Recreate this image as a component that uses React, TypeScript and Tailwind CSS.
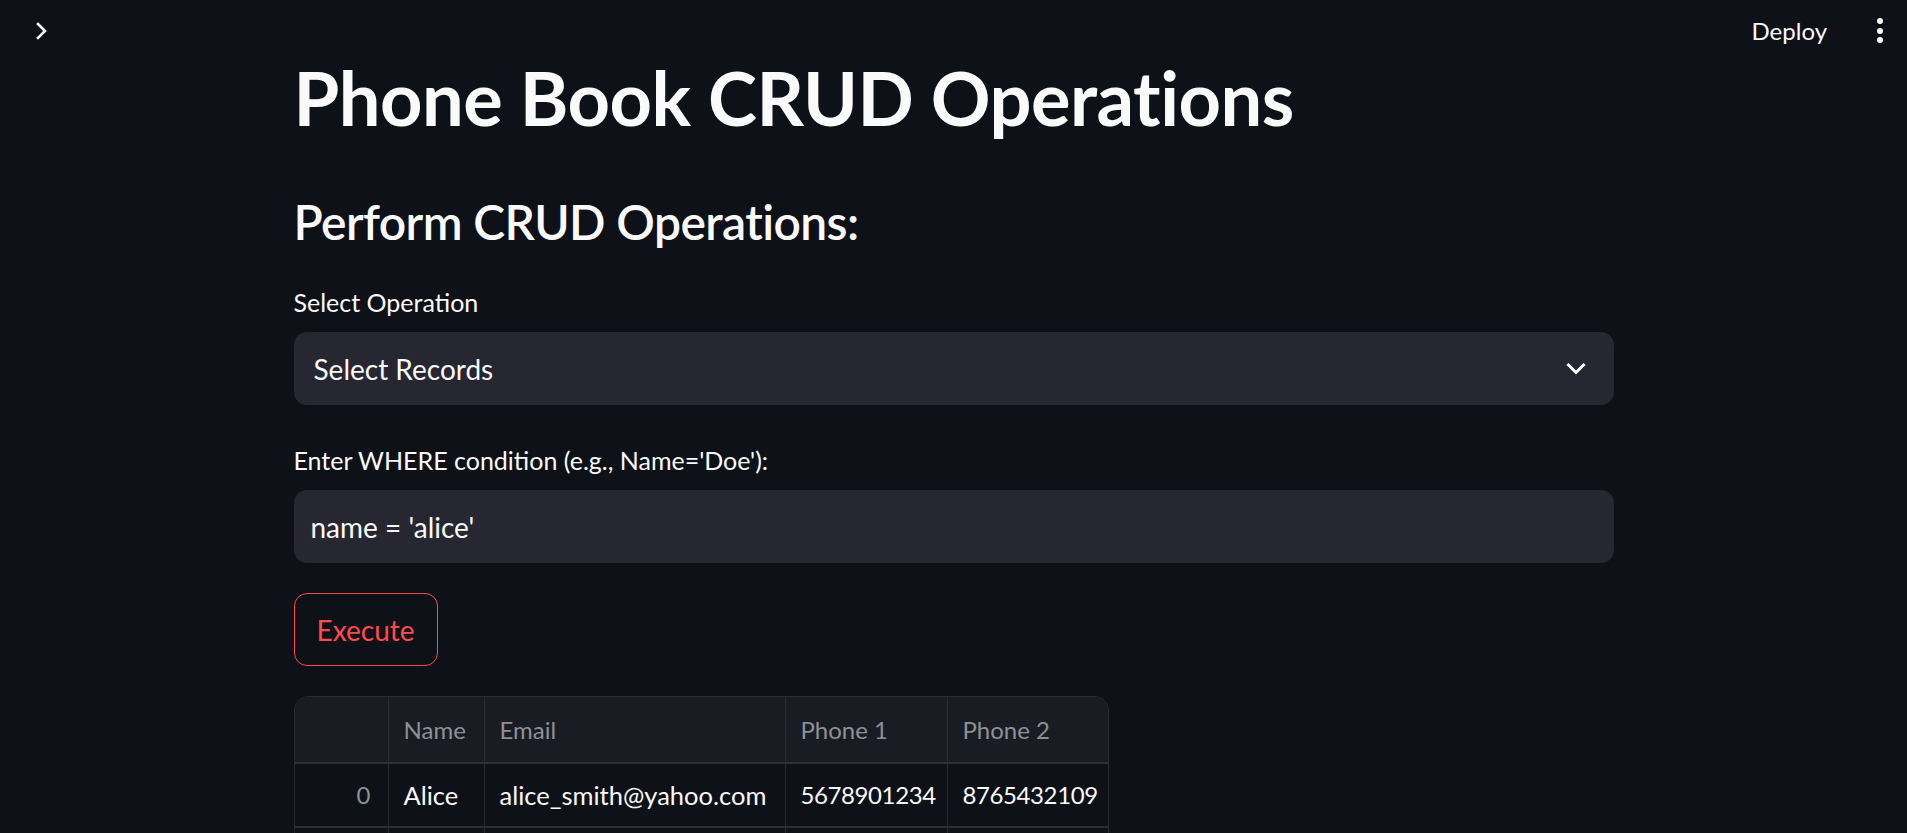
import { useState } from "react";

function ChevronRight() {
  return (
    <svg width="14" height="20" viewBox="0 0 14 20" fill="none">
      <path d="M3 3l7 7-7 7" stroke="#fafafa" strokeWidth="2.6" strokeLinecap="square" />
    </svg>
  );
}

function ChevronDown() {
  return (
    <svg width="20" height="14" viewBox="0 0 20 14" fill="none">
      <path d="M2.5 3l7.5 7.5L17.5 3" stroke="#fafafa" strokeWidth="3" strokeLinecap="square" />
    </svg>
  );
}

const columns = ["", "Name", "Email", "Phone 1", "Phone 2"];
const rows = [["0", "Alice", "alice_smith@yahoo.com", "5678901234", "8765432109"]];

export default function App() {
  const [where, setWhere] = useState("name = 'alice'");

  return (
    <div className="min-h-screen bg-[#0e1117] text-[#fafafa] font-[family-name:Lato,sans-serif]">
      <header className="flex h-[53px] items-center justify-between pl-[35px] pr-[24px] pt-[8px]">
        <button type="button" className="flex items-center">
          <ChevronRight />
        </button>
        <div className="flex items-center gap-[50px]">
          <span className="text-[24px] leading-none">Deploy</span>
          <div className="flex flex-col gap-[3.5px]">
            <span className="h-[6px] w-[6px] rounded-full bg-[#fafafa]" />
            <span className="h-[6px] w-[6px] rounded-full bg-[#fafafa]" />
            <span className="h-[6px] w-[6px] rounded-full bg-[#fafafa]" />
          </div>
        </div>
      </header>

      <main className="mx-auto flex w-[1320px] flex-col pb-20">
        <h1 className="mt-[1px] text-[74px] font-bold leading-[1.2] tracking-[-0.5px]">Phone Book CRUD Operations</h1>
        <h2 className="mt-[50px] text-[48px] font-semibold leading-[1.2] tracking-[-0.6px]">Perform CRUD Operations:</h2>

        <label className="mt-[37px] text-[25px] leading-[1.2]">Select Operation</label>
        <div className="mt-[15px] flex h-[73px] items-center justify-between rounded-[13px] bg-[#262730] pl-[20px] pr-[28px]">
          <span className="text-[28px]">Select Records</span>
          <ChevronDown />
        </div>

        <label className="mt-[40px] text-[25px] leading-[1.2]">Enter WHERE condition (e.g., Name='Doe'):</label>
        <input
          value={where}
          onChange={(e) => setWhere(e.target.value)}
          className="mt-[15px] h-[73px] rounded-[13px] bg-[#262730] pl-[17px] text-[28px] text-[#fafafa] outline-none"
        />

        <button
          type="button"
          className="mt-[30px] h-[73px] w-[144px] rounded-[13px] border border-[#ff4b4b] text-[28px] text-[#ff4b4b]"
        >
          Execute
        </button>

        <div className="mt-[30px] w-[815px] overflow-hidden rounded-[14px] border border-[#2a2c33]">
          <div className="grid h-[67px] grid-cols-[94px_96px_301px_162px_160px] border-b-2 border-[#2f3139] bg-[#1a1c24] text-[24px] text-[#8e9096]">
            {columns.map((c, i) => (
              <div key={i} className="flex items-center border-r border-[#2a2c33] pl-[15px] last:border-r-0">
                {c}
              </div>
            ))}
          </div>
          {rows.map((r, ri) => (
            <div key={ri} className="grid h-[64px] grid-cols-[94px_96px_301px_162px_160px] border-b-2 border-[#2a2c33] text-[25.5px]">
              {r.map((v, i) => (
                <div
                  key={i}
                  className={
                    i === 0
                      ? "flex items-center justify-end border-r border-[#2a2c33] pr-[17px] text-[24px] text-[#8e9096]"
                      : i >= 3
                        ? "flex items-center border-r border-[#2a2c33] pl-[15px] text-[24px] tracking-[-0.4px] last:border-r-0"
                        : "flex items-center border-r border-[#2a2c33] pl-[15px] last:border-r-0"
                  }
                >
                  {v}
                </div>
              ))}
            </div>
          ))}
          <div className="grid h-[20px] grid-cols-[94px_96px_301px_162px_160px]">
            {columns.map((c, i) => (
              <div key={i} className="border-r border-[#2a2c33] last:border-r-0" />
            ))}
          </div>
        </div>
      </main>
    </div>
  );
}
